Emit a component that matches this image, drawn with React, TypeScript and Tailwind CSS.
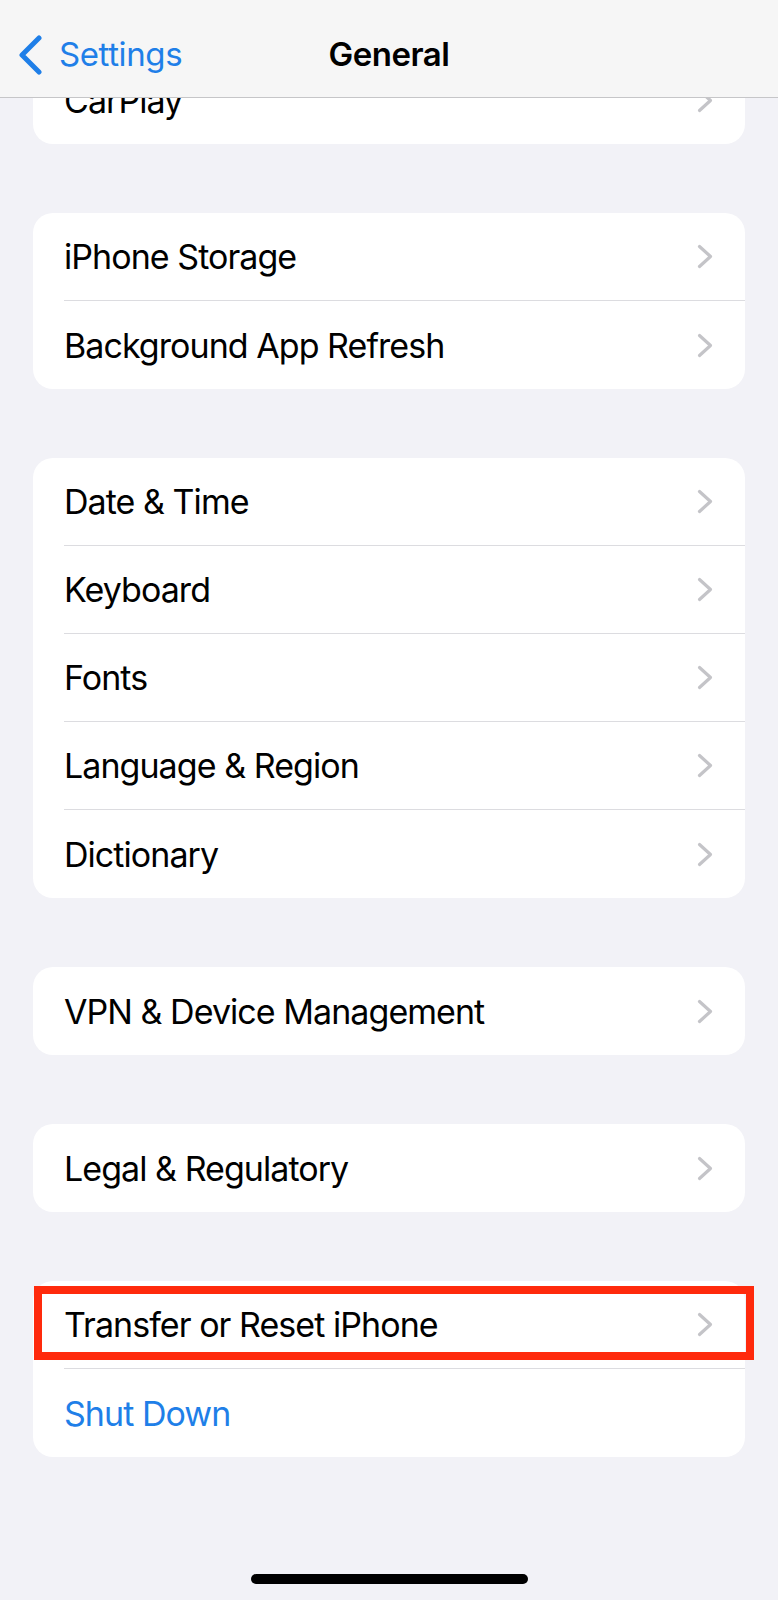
import React from 'react';

const font = { fontFamily: 'Inter, "Liberation Sans", sans-serif' };

function Chevron() {
  return (
    <svg width="16" height="25" viewBox="0 0 16 25" fill="none" className="shrink-0">
      <polyline points="2.5,2.5 13.5,12.5 2.5,22.5" stroke="#c4c4c8" strokeWidth="3.2" strokeLinecap="round" strokeLinejoin="round" />
    </svg>
  );
}

function Row({ label, last, blue, chevron = true }: { label: string; last?: boolean; blue?: boolean; chevron?: boolean }) {
  return (
    <div className="pl-[31px]">
      <div className={`h-[88px] flex items-center pr-[32px] ${last ? '' : 'border-b border-[#dcdce0]'}`}>
        <span className={`text-[34px] tracking-[-0.95px] ${blue ? 'text-[#1f7fe8]' : 'text-black'}`}>{label}</span>
        {chevron && <span className="ml-auto"><Chevron /></span>}
      </div>
    </div>
  );
}

function Card({ rows, children }: { rows: string[]; children?: React.ReactNode }) {
  return (
    <div className="relative bg-white rounded-[20px]">
      {rows.map((r, i) => (
        <Row key={r} label={r} last={i === rows.length - 1} />
      ))}
      {children}
    </div>
  );
}

export default function App() {
  return (
    <div className="relative min-h-[1600px] h-[1600px] bg-[#f2f2f7] flex flex-col overflow-hidden" style={font}>
      {/* Nav bar */}
      <div className="absolute top-0 left-0 right-0 h-[98px] z-10 bg-[#f6f6f6] border-b border-[#c6c6c8] flex items-center pt-[12px]">
        <div className="flex items-center pl-[18px] gap-[15px]">
          <svg width="26" height="40" viewBox="0 0 26 40" fill="none">
            <polyline points="21,3 4,20 21,37" stroke="#1f7fe8" strokeWidth="5" strokeLinecap="round" strokeLinejoin="round" />
          </svg>
          <span className="text-[33px] text-[#1f7fe8] tracking-[-0.4px]">Settings</span>
        </div>
        <div className="absolute left-0 right-0 top-[12px] bottom-0 flex items-center justify-center pointer-events-none">
          <span className="text-[33px] font-semibold text-black tracking-[-0.5px]">General</span>
        </div>
      </div>

      {/* Content */}
      <div className="flex flex-col gap-[69px] px-[33px] pt-[56px]">
        <Card rows={['CarPlay']} />
        <Card rows={['iPhone Storage', 'Background App Refresh']} />
        <Card rows={['Date & Time', 'Keyboard', 'Fonts', 'Language & Region', 'Dictionary']} />
        <Card rows={['VPN & Device Management']} />
        <Card rows={['Legal & Regulatory']} />
        <div className="relative bg-white rounded-[20px]">
          <Row label="Transfer or Reset iPhone" />
          <Row label="Shut Down" last blue chevron={false} />
          <div className="absolute top-[5px] left-[1px] right-[-9px] h-[74px] border-[8px] border-[#ff2a0c]" />
        </div>
      </div>

      {/* Home indicator */}
      <div className="mt-auto mb-[16px] flex justify-center">
        <div className="w-[277px] h-[10px] rounded-full bg-black" />
      </div>
    </div>
  );
}
